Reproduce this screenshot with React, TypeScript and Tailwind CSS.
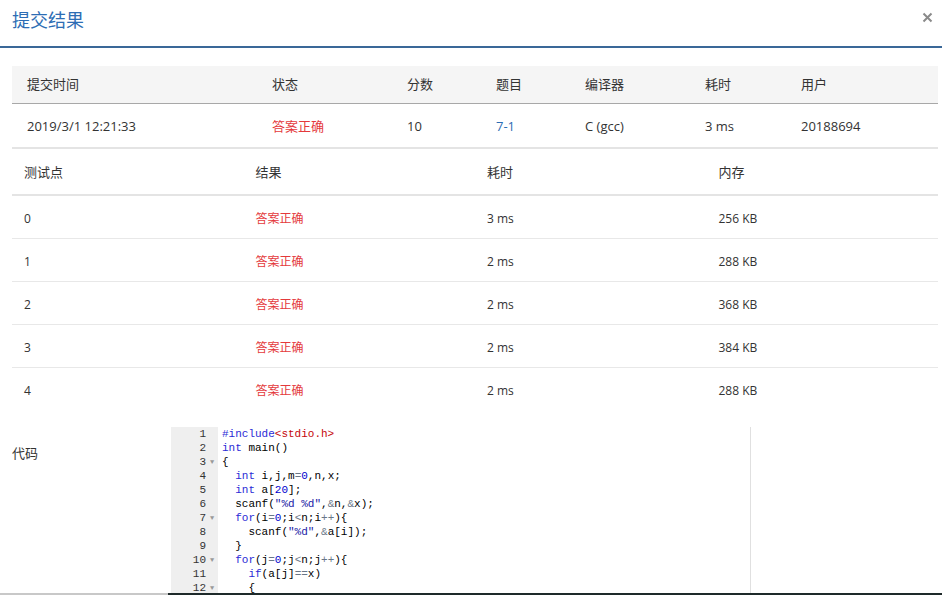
import React from "react";

type Tok = [string, string?];

const K = "text-[#2b2bd6]";
const S = "text-[#1a1aa6]";
const N = "text-[#0000cd]";
const O = "text-[#687687]";
const R = "text-[#c5060b]";

const code: { toks: Tok[]; fold?: boolean }[] = [
  { toks: [["#include", K], ["<stdio.h>", R]] },
  { toks: [["int", K], [" main()"]] },
  { toks: [["{"]], fold: true },
  { toks: [["  "], ["int", K], [" i,j,m"], ["=", O], ["0", N], [",n,x;"]] },
  { toks: [["  "], ["int", K], [" a["], ["20", N], ["];"]] },
  { toks: [["  scanf("], ['"%d %d"', S], [","], ["&", O], ["n,"], ["&", O], ["x);"]] },
  { toks: [["  "], ["for", K], ["(i"], ["=", O], ["0", N], [";i"], ["<", O], ["n;i"], ["++", O], ["){"]], fold: true },
  { toks: [["    scanf("], ['"%d"', S], [","], ["&", O], ["a[i]);"]] },
  { toks: [["  }"]] },
  { toks: [["  "], ["for", K], ["(j"], ["=", O], ["0", N], [";j"], ["<", O], ["n;j"], ["++", O], ["){"]], fold: true },
  { toks: [["    "], ["if", K], ["(a[j]"], ["==", O], ["x)"]] },
  { toks: [["    {"]], fold: true },
];

const RED = "text-[#e4393c]";

export default function App() {
  const tests = [
    ["0", "3 ms", "256 KB"],
    ["1", "2 ms", "288 KB"],
    ["2", "2 ms", "368 KB"],
    ["3", "2 ms", "384 KB"],
    ["4", "2 ms", "288 KB"],
  ];
  return (
    <div
      className="relative w-[942px] h-[595px] overflow-hidden bg-white text-[13px] text-[#333]"
      style={{ fontFamily: '"Open Sans", "Noto Sans CJK SC", sans-serif' }}
    >
      <div className="h-[46px] flex items-center justify-between pl-3 pr-[8px]">
        <div className="text-[18px] text-[#2d6db4] pb-[6px]">提交结果</div>
        <div className="w-[12px] h-[12px] mr-[1px] mb-[12px] flex items-center justify-center">
          <svg width="11" height="11" viewBox="0 0 11 11">
            <path d="M1.5 1.5 L9.5 9.5 M9.5 1.5 L1.5 9.5" stroke="#8a8a8a" strokeWidth="2" />
          </svg>
        </div>
      </div>
      <div className="h-[2px] bg-[#3a6898]" />

      <div className="pl-3 pr-[4px] pt-[18px]">
        {/* Summary table */}
        <div className="grid grid-cols-[245px_135px_89px_89px_120px_96px_1fr] h-[38px] items-center bg-[#f5f5f5] border-b border-[#a8a8a8]">
          {["提交时间", "状态", "分数", "题目", "编译器", "耗时", "用户"].map((h) => (
            <div key={h} className="pl-[15px] text-[#333]">{h}</div>
          ))}
        </div>
        <div className="grid grid-cols-[245px_135px_89px_89px_120px_96px_1fr] h-[45px] pt-[3px] items-center border-b-2 border-[#e4e4e4]">
          <div className="pl-[15px]">2019/3/1 12:21:33</div>
          <div className={`pl-[15px] ${RED}`}>答案正确</div>
          <div className="pl-[15px]">10</div>
          <div className="pl-[15px] text-[#2d6db4]">7-1</div>
          <div className="pl-[15px]">C (gcc)</div>
          <div className="pl-[15px]">3 ms</div>
          <div className="pl-[15px]">20188694</div>
        </div>

        {/* Test cases table */}
        <div className="grid grid-cols-4 h-[47px] pt-[2px] items-center border-b-2 border-[#e4e4e4]">
          {["测试点", "结果", "耗时", "内存"].map((h) => (
            <div key={h} className="pl-[12px] text-[#333]">{h}</div>
          ))}
        </div>
        {tests.map((t, i) => (
          <div
            key={t[0]}
            className={`grid grid-cols-4 h-[43px] pt-[3px] items-center text-[12px] ${i < tests.length - 1 ? "border-b border-[#e8e8e8]" : ""}`}
          >
            <div className="pl-[12px]">{t[0]}</div>
            <div className={`pl-[12px] ${RED}`}>答案正确</div>
            <div className="pl-[12px]">{t[1]}</div>
            <div className="pl-[12px]">{t[2]}</div>
          </div>
        ))}

        {/* Code */}
        <div className="flex mt-[16px]">
          <div className="w-[159px] pt-[17px] text-[13px]">代码</div>
          <div
            className="relative flex w-[620px] text-[11px] leading-[14px]"
            style={{ fontFamily: '"Liberation Mono", "DejaVu Sans Mono", monospace' }}
          >
            <div className="w-[47px] bg-[#efefef] text-[#333]">
              {code.map((l, i) => (
                <div key={i} className="flex h-[14px]">
                  <div className="w-[35px] text-right">{i + 1}</div>
                  <div className="w-[12px] text-center text-[#999] text-[7px]">{l.fold ? "▼" : ""}</div>
                </div>
              ))}
            </div>
            <div className="relative flex-1 pl-[4px] text-black whitespace-pre">
              {code.map((l, i) => (
                <div key={i} className="h-[14px]">
                  {l.toks.map((t, j) => (
                    <span key={j} className={t[1] || ""}>{t[0]}</span>
                  ))}
                </div>
              ))}
              <div className="absolute top-0 bottom-0 left-[532px] w-[1px] bg-[#e0e0e0]" />
            </div>
          </div>
        </div>
      </div>

      <div className="absolute bottom-0 left-0 right-0 h-[2px] flex">
        <div className="w-[168px] bg-[#c8c8c8]" />
        <div className="flex-1 bg-[#1e2a2a]" />
      </div>
    </div>
  );
}
